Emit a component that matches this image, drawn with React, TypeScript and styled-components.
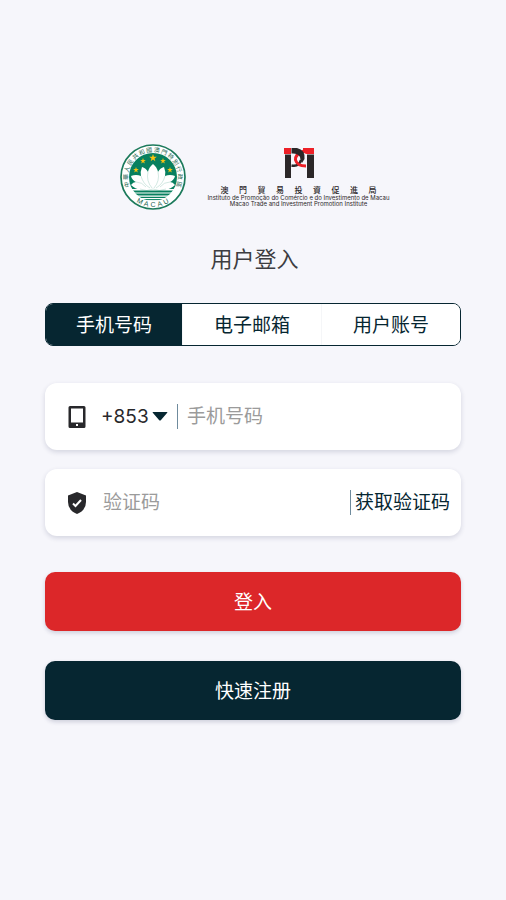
import React, { useState } from "react";
import styled, { createGlobalStyle, css } from "styled-components";

const sans = `"Liberation Sans", "Noto Sans CJK SC", sans-serif`;
const ink = "#062631";

const GlobalStyle = createGlobalStyle`
  *, *::before, *::after { box-sizing: border-box; }
  body { margin: 0; min-height: 100vh; background: #f6f6fb; font-family: ${sans}; }
  button, input, select { font: inherit; }
`;

const Page = styled.main`
  padding: 144px 45px 48px;
`;

const Intro = styled.header`
  padding-left: 3px;
`;

const Logos = styled.div`
  display: flex;
  justify-content: center;
  align-items: flex-start;
  gap: 22px;
`;

const Emblem = styled.svg`
  width: 66px;
  height: 66px;
  flex: none;
`;

const Institute = styled.div`
  display: flex;
  flex-direction: column;
  align-items: center;
  padding-top: 3px;
  color: #2b2728;
  white-space: nowrap;
`;

const Mark = styled.svg`
  width: 32px;
  height: 32px;
`;

const ChineseName = styled.div`
  display: flex;
  justify-content: space-between;
  width: 156px;
  margin-top: 6px;
  font: 500 8px/10px "Noto Sans CJK TC", sans-serif;
`;

const LatinName = styled.div`
  font: 400 6px/6px Inter, sans-serif;
`;

const Title = styled.h1`
  margin: 30px 0 29px;
  text-align: center;
  font: 400 22px/34px "Noto Sans CJK SC", sans-serif;
  color: #3d3d41;
`;

const Tabs = styled.div`
  display: grid;
  grid-template-columns: 136fr 139fr 139fr;
  height: 43px;
  border: 1px solid ${ink};
  border-radius: 8px;
  background: #fff;
  overflow: hidden;
`;

const Tab = styled.button<{ $active: boolean }>`
  border: 0;
  border-left: 1px solid #f5f6f8;
  padding: 2px 0 0;
  background: #fff;
  color: ${ink};
  font-size: 19px;
  line-height: 28px;
  cursor: pointer;
  &:first-child { border-left: 0; }
  ${(p) => p.$active && css`
    background: ${ink};
    color: #fff;
  `}
`;

const Form = styled.form`
  display: flex;
  flex-direction: column;
`;

const Field = styled.div`
  display: flex;
  align-items: center;
  height: 67px;
  padding: 0 11px 0 21px;
  margin-top: 19px;
  border-radius: 12px;
  background: #fff;
  box-shadow: 0 2px 5px rgba(30, 35, 80, 0.16);
  &:first-child { margin-top: 37px; }
`;

const FieldIcon = styled.svg`
  width: 22px;
  height: 24px;
  flex: none;
`;

const CodePicker = styled.div`
  display: grid;
  grid-template-columns: 51px 16px;
  align-items: center;
  flex: none;
  margin-left: 13px;
`;

const CodeSelect = styled.select`
  grid-area: 1 / 1 / 2 / 3;
  appearance: none;
  width: 67px;
  height: 32px;
  border: 0;
  padding: 0;
  background: transparent;
  color: #28282b;
  font: 19px/32px Inter, sans-serif;
`;

const Caret = styled.svg`
  grid-area: 1 / 2 / 2 / 3;
  width: 16px;
  height: 9px;
  pointer-events: none;
`;

const Rule = styled.span<{ $gap: number }>`
  flex: none;
  width: 1px;
  height: 25px;
  margin-left: ${(p) => p.$gap}px;
  background: #6f8b9d;
`;

const TextInput = styled.input<{ $gap: number }>`
  flex: 1;
  min-width: 0;
  height: 32px;
  border: 0;
  padding: 1px 0 0;
  margin-left: ${(p) => p.$gap}px;
  outline: 0;
  background: transparent;
  color: #28282b;
  font-size: 19px;
  &::placeholder { color: #9b9b9b; opacity: 1; }
`;

const GetCode = styled.button`
  flex: none;
  border: 0;
  padding: 1px 0 0;
  margin-left: 4px;
  background: transparent;
  color: ${ink};
  font-size: 19px;
  line-height: 32px;
  cursor: pointer;
`;

const Action = styled.button<{ $tone: string; $space: number }>`
  height: 59px;
  margin-top: ${(p) => p.$space}px;
  border: 0;
  border-radius: 10px;
  padding: 2px 0 0;
  background: ${(p) => p.$tone};
  color: #fff;
  font-size: 19px;
  line-height: 28px;
  box-shadow: 0 2px 4px rgba(30, 35, 80, 0.18);
  cursor: pointer;
`;

const RING = "中華人民共和國澳門特別行政區".split("");
const STARS = [
  { x: 33, y: 14, r: 4 },
  { x: 23, y: 17, r: 3 },
  { x: 43, y: 17, r: 3 },
  { x: 16, y: 26, r: 3 },
  { x: 50, y: 26, r: 3 },
];

function starPoints(cx: number, cy: number, r: number) {
  return Array.from({ length: 10 }, (_, i) => {
    const d = i % 2 ? r * 0.4 : r;
    const a = (i * Math.PI) / 5 - Math.PI / 2;
    return `${(cx + d * Math.cos(a)).toFixed(2)},${(cy + d * Math.sin(a)).toFixed(2)}`;
  }).join(" ");
}

function MacauEmblem() {
  return (
    <Emblem viewBox="0 0 66 66" role="img" aria-label="澳門特別行政區">
      <defs>
        <clipPath id="disc"><circle cx="33" cy="33" r="24" /></clipPath>
      </defs>
      <circle cx="33" cy="33" r="32" fill="#fff" stroke="#1c7a5b" strokeWidth="1.7" />
      <g clipPath="url(#disc)">
        <rect x="8" y="8" width="50" height="37" fill="#08805f" />
        <g stroke="#08805f">
          <path d="M8 47.500H58" strokeWidth="2" />
          <path d="M8 50.500H58" strokeWidth="1.800" />
          <path d="M8 53.300H58" strokeWidth="1.300" />
          <path d="M8 55.600H58" strokeWidth="1" />
        </g>
      </g>
      <path
        d="M33 20Q37 23 38 28Q40 24 44 23Q46 28 45 32Q50 30 55 32Q54 36 50 38Q53 38 55 41Q51 45 45 46H21Q15 45 11 41Q13 38 16 38Q12 36 11 32Q16 30 21 32Q20 28 22 23Q26 24 28 28Q29 23 33 20Z"
        fill="#fff"
      />
      <path
        d="M28 28Q26 37 32 44M38 28Q40 37 34 44M21 32Q23 40 30 44M45 32Q43 40 36 44M16 38Q22 38 26 43M50 38Q44 38 40 43M20 45Q27 48 33 45Q39 48 46 45"
        fill="none"
        stroke="#08805f"
        strokeOpacity="0.3"
        strokeWidth="0.6"
      />
      {STARS.map((s) => (
        <polygon key={`${s.x}-${s.y}`} points={starPoints(s.x, s.y, s.r)} fill="#fbc312" />
      ))}
      <g fontFamily="'Noto Sans CJK TC', sans-serif" fontSize="6" fill="#23664f" textAnchor="middle">
        {RING.map((c, i) => (
          <text key={i} x="33" y="8" transform={`rotate(${-106 + (i * 212) / (RING.length - 1)} 33 33)`}>{c}</text>
        ))}
      </g>
      <g fontFamily="'Liberation Sans', sans-serif" fontSize="7" fill="#23664f" textAnchor="middle">
        {"MACAU".split("").map((c, i) => (
          <text key={i} x="33" y="63" transform={`rotate(${28 - i * 14} 33 33)`}>{c}</text>
        ))}
      </g>
    </Emblem>
  );
}

function InstituteLogo() {
  return (
    <Institute>
      <Mark viewBox="0 0 32 32" aria-hidden="true">
        <path d="M1 1H8V7H1ZM20 1H31V7H24Q21 7 20 4Z" fill="#ed2027" />
        <path d="M2 7.500H8V31H2ZM24 7.500H31V31H24Z" fill="#2b2728" />
        <path d="M8.500 18.500Q16 20 18 13" fill="none" stroke="#2b2728" strokeWidth="2.600" />
        <path d="M21 4Q12 7 12.500 13Q14 19 23 19" fill="none" stroke="#ed2027" strokeWidth="3" />
        <path d="M8.500 1H14Q22.500 3 21.500 12L19 16Q17 13 17 10Q15 6 8.500 6.500Z" fill="#2b2728" />
      </Mark>
      <ChineseName>
        {"澳門貿易投資促進局".split("").map((c) => <span key={c}>{c}</span>)}
      </ChineseName>
      <LatinName lang="pt">Instituto de Promoção do Comércio e do Investimento de Macau</LatinName>
      <LatinName lang="en">Macao Trade and Investment Promotion Institute</LatinName>
    </Institute>
  );
}

const TABS = ["手机号码", "电子邮箱", "用户账号"];

export default function App() {
  const [tab, setTab] = useState(0);
  return (
    <>
      <GlobalStyle />
      <Page lang="zh-CN">
        <Intro>
          <Logos>
            <MacauEmblem />
            <InstituteLogo />
          </Logos>
          <Title>用户登入</Title>
        </Intro>
        <Tabs role="tablist">
          {TABS.map((t, i) => (
            <Tab key={t} type="button" role="tab" aria-selected={i === tab} $active={i === tab} onClick={() => setTab(i)}>
              {t}
            </Tab>
          ))}
        </Tabs>
        <Form onSubmit={(e) => e.preventDefault()}>
          <Field>
            <FieldIcon viewBox="0 0 22 24" aria-hidden="true">
              <path fillRule="evenodd" d="M4 1H18Q19.500 1 19.500 2.500V21.500Q19.500 23 18 23H4Q2.500 23 2.500 21.500V2.500Q2.500 1 4 1ZM5 3.500V17.500H17V3.500ZM10 19V21H12V19Z" fill="#28282b" />
            </FieldIcon>
            <CodePicker>
              <CodeSelect aria-label="区号" defaultValue="+853">
                <option>+853</option>
                <option>+852</option>
                <option>+86</option>
              </CodeSelect>
              <Caret viewBox="0 0 16 9" aria-hidden="true">
                <path d="M1 0H15Q16 0 15 1L9 8Q8 9 7 8L1 1Q0 0 1 0Z" fill={ink} />
              </Caret>
            </CodePicker>
            <Rule $gap={9} />
            <TextInput $gap={9} type="tel" aria-label="手机号码" placeholder="手机号码" />
          </Field>
          <Field>
            <FieldIcon viewBox="0 0 22 24" aria-hidden="true">
              <path d="M11 1L20 4.500V11Q20 19.500 11 23Q2 19.500 2 11V4.500Z" fill="#28282b" />
              <path d="M7 12.500L9.500 15L15 9" fill="none" stroke="#fff" strokeWidth="2" />
            </FieldIcon>
            <TextInput $gap={15} aria-label="验证码" placeholder="验证码" />
            <Rule $gap={8} />
            <GetCode type="button">获取验证码</GetCode>
          </Field>
          <Action type="submit" $tone="#dc2729" $space={36}>登入</Action>
          <Action type="button" $tone={ink} $space={30}>快速注册</Action>
        </Form>
      </Page>
    </>
  );
}
